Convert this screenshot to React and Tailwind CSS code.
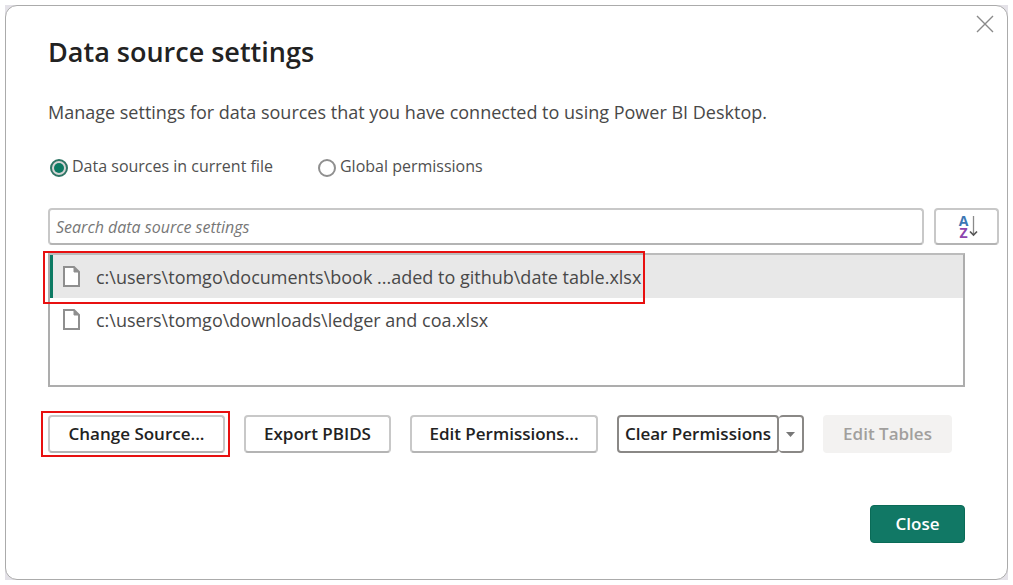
import { useState } from "react"
import clsx from "clsx"

const sources = [
  "c:\\users\\tomgo\\documents\\book ...aded to github\\date table.xlsx",
  "c:\\users\\tomgo\\downloads\\ledger and coa.xlsx",
]

const outlined =
  "h-[38px] whitespace-nowrap rounded border-2 border-[#c8c8c8] border-b-[#b4b4b4] bg-white text-[#222]"

function FileIcon() {
  return (
    <svg className="h-[21px] w-[17px] shrink-0" viewBox="0 0 17 21" aria-hidden="true">
      <path d="M1 1h10l5 5v14H1z" fill="#fff" stroke="#8f8f8f" strokeWidth="2" />
      <path d="M11 1v5h5z" fill="#8f8f8f" stroke="#8f8f8f" />
    </svg>
  )
}

function Callout({ className }) {
  return (
    <span
      className={clsx("pointer-events-none absolute z-10 border-2 border-[#e81010]", className)}
    />
  )
}

function Radio({ label, checked, onChange }) {
  return (
    <label className="flex items-center gap-1 text-[#505050]">
      <span className="relative mt-1 grid h-[18px] w-[18px] place-items-center">
        <input
          type="radio"
          name="scope"
          checked={checked}
          onChange={onChange}
          className="h-[18px] w-[18px] appearance-none rounded-full border-2 border-[#8f8f8f] bg-white checked:border-[#2f7565] checked:bg-[#d5d5d5]"
        />
        {checked && (
          <span className="pointer-events-none absolute h-[10px] w-[10px] rounded-full bg-[#0c7a63]" />
        )}
      </span>
      {label}
    </label>
  )
}

export default function App() {
  const [scope, setScope] = useState("file")
  const [selected, setSelected] = useState(0)

  return (
    <main className="bg-white p-[5px] font-['Open_Sans',sans-serif] text-[17px] leading-6">
      <div className="bg-[#e4e2e8]">
        <section
          role="dialog"
          aria-labelledby="title"
          className="rounded-xl border border-[#ababab] bg-white pb-9 pl-[42px]"
        >
          <header className="flex items-start justify-between pr-3 pt-2">
            <h1 id="title" className="mt-5 text-[27px] font-semibold leading-9 text-[#222]">
              Data source settings
            </h1>
            <button type="button" aria-label="Close dialog" className="grid h-5 w-5 place-items-center">
              <svg className="h-[18px] w-[18px]" viewBox="0 0 18 18" aria-hidden="true">
                <path d="M1 1l16 16M17 1L1 17" stroke="#8a8a8a" strokeWidth="1.4" />
              </svg>
            </button>
          </header>

          <p className="mt-[30px] text-lg leading-6 text-[#484848]">
            Manage settings for data sources that you have connected to using Power BI Desktop.
          </p>

          <div className="ml-0.5 mt-[30px] flex gap-[45px] text-[16px]">
            <Radio
              label="Data sources in current file"
              checked={scope === "file"}
              onChange={() => setScope("file")}
            />
            <Radio
              label="Global permissions"
              checked={scope === "global"}
              onChange={() => setScope("global")}
            />
          </div>

          <div className="mt-[30px] flex gap-[10px] pr-2">
            <input
              type="text"
              aria-label="Search data source settings"
              placeholder="Search data source settings"
              className="h-[37px] min-w-0 flex-1 rounded border-2 border-[#c8c8c8] border-b-[#b4b4b4] px-1.5 text-[16px] outline-none placeholder:italic placeholder:text-[#777]"
            />
            <button
              type="button"
              aria-label="Sort"
              className="flex h-[37px] w-[65px] items-center justify-center gap-px rounded border-2 border-[#c8c8c8] border-b-[#b4b4b4] pl-1"
            >
              <span className="flex flex-col text-[14px] font-bold leading-[12px]">
                <span className="text-[#3c77b4]">A</span>
                <span className="text-[#8d45ad]">Z</span>
              </span>
              <svg className="h-[21px] w-[9px]" viewBox="0 0 9 21" fill="none" aria-hidden="true">
                <path d="M4.5 0v19" stroke="#8a8a8a" strokeWidth="1.3" />
                <path d="M1 15.5l3.500 3.500 3.500-3.500" stroke="#555" strokeWidth="1.700" />
              </svg>
            </button>
          </div>

          <ul className="mr-[42px] mt-2 h-[134px] border-2 border-[#adadad] border-t-[#bcbcbc]">
            {sources.map((source, i) => (
              <li key={source}>
                <button
                  type="button"
                  onClick={() => setSelected(i)}
                  className={clsx(
                    "flex h-[43px] w-full border-l-[3px] text-left text-lg text-[#484848]",
                    selected === i ? "border-[#0c7a63] bg-[#e8e8e8]" : "border-transparent"
                  )}
                >
                  <span className="relative flex items-center gap-4 pl-[10px]">
                    <FileIcon />
                    {source}
                    {i === 0 && <Callout className="-bottom-[6px] -left-[10px] -right-1 -top-[4px]" />}
                  </span>
                </button>
              </li>
            ))}
          </ul>

          <div className="mt-7 flex gap-[19px] font-semibold">
            <div className="relative">
              <button type="button" className={clsx(outlined, "w-[177px]")}>
                Change Source...
              </button>
              <Callout className="-bottom-1 -left-[7px] -right-[5px] -top-1" />
            </div>
            <button type="button" className={clsx(outlined, "w-[147px]")}>
              Export PBIDS
            </button>
            <button type="button" className={clsx(outlined, "w-[188px]")}>
              Edit Permissions...
            </button>
            <div className="flex">
              <button
                type="button"
                className="h-[38px] w-[162px] whitespace-nowrap rounded border-2 border-[#8a8886] text-[#222]"
              >
                Clear Permissions
              </button>
              <button
                type="button"
                aria-label="More clear options"
                className="grid h-[38px] w-[25px] place-items-center rounded border-2 border-l-0 border-[#8a8886]"
              >
                <svg className="h-[5px] w-[9px]" viewBox="0 0 9 5" aria-hidden="true">
                  <path d="M0 0h9L4.500 5z" fill="#777" />
                </svg>
              </button>
            </div>
            <button
              type="button"
              disabled
              className="h-[38px] w-[129px] whitespace-nowrap rounded bg-[#f3f2f1] text-[#a19f9d]"
            >
              Edit Tables
            </button>
          </div>

          <footer className="mt-[52px] flex justify-end pr-[42px]">
            <button
              type="button"
              className="h-[38px] w-[95px] rounded border border-[#0a6b57] bg-[#117865] font-semibold text-white"
            >
              Close
            </button>
          </footer>
        </section>
      </div>
    </main>
  )
}
